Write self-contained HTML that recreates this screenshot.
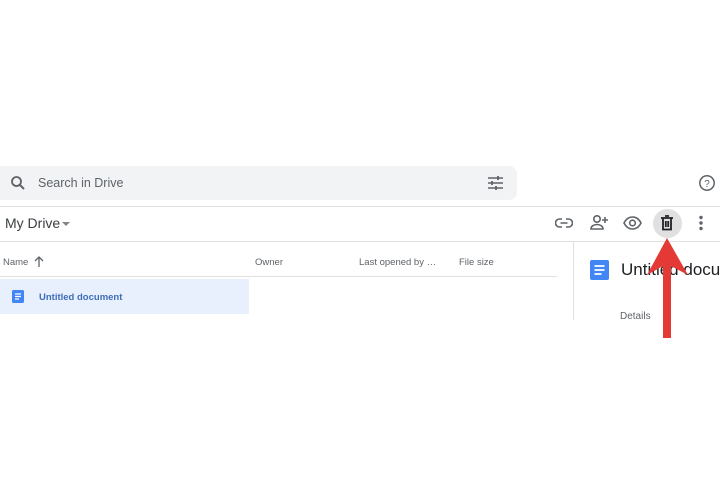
<!DOCTYPE html>
<html><head><style>
body{margin:0;width:720px;height:480px;background:#fff;position:relative;overflow:hidden;font-family:"Liberation Sans",Arial,sans-serif;}
.a{position:absolute}
</style></head><body>
<div class="a" style="left:0;top:166px;width:517px;height:34px;background:#f1f3f4;border-radius:0 8px 8px 0"></div>
<svg class="a" style="left:9px;top:174px" width="18" height="18" viewBox="0 0 24 24"><circle cx="10" cy="10" r="6" fill="none" stroke="#5f6368" stroke-width="2.4"/><path d="M14.5 14.5L20 20" stroke="#5f6368" stroke-width="2.6"/></svg>
<div class="a" style="left:38px;top:176px;font-size:12.5px;color:#5f6368">Search in Drive</div>
<svg class="a" style="left:487px;top:175px" width="17" height="16" viewBox="0 0 17 16" stroke="#5f6368" stroke-width="1.6"><path d="M1 3h15M1 8h15M1 13h15"/><path d="M11 1v4M5 6v4M9 11v4" stroke-width="1.8"/></svg>
<svg class="a" style="left:698px;top:174px" width="18" height="18" viewBox="0 0 18 18"><circle cx="9" cy="9" r="7.2" fill="none" stroke="#5f6368" stroke-width="1.5"/><text x="9" y="13" text-anchor="middle" font-size="10" fill="#5f6368" font-family="Liberation Sans">?</text></svg>
<div class="a" style="left:0;top:206px;width:720px;height:1px;background:#e0e0e0"></div>
<div class="a" style="left:5px;top:215px;font-size:14px;color:#3c4043">My Drive</div>
<div class="a" style="left:62px;top:222px;border:4px solid transparent;border-top:4px solid #80868b"></div>
<svg class="a" style="left:555px;top:216px" width="18" height="14" viewBox="0 0 18 14" fill="none" stroke="#5f6368" stroke-width="1.6"><path d="M7 3H4.5a4 4 0 0 0 0 8H7M11 3h2.5a4 4 0 0 1 0 8H11M5.5 7h7"/></svg>
<svg class="a" style="left:589px;top:214px" width="20" height="17" viewBox="0 0 20 17" fill="none" stroke="#5f6368" stroke-width="1.6"><circle cx="8" cy="5" r="3.2"/><path d="M2 15c0-3 3-4.5 6-4.5s6 1.5 6 4.5z"/><path d="M16 3v6M13 6h6"/></svg>
<svg class="a" style="left:623px;top:216px" width="19" height="14" viewBox="0 0 19 14" fill="none" stroke="#5f6368" stroke-width="1.6"><path d="M1 7c2-4 5-6 8.5-6S16 3 18 7c-2 4-5 6-8.5 6S3 11 1 7z"/><circle cx="9.5" cy="7" r="2.8"/></svg>
<div class="a" style="left:653px;top:209px;width:29px;height:29px;border-radius:50%;background:#e0e0e0"></div>
<svg class="a" style="left:660px;top:215px" width="14" height="16" viewBox="0 0 14 16" fill="none" stroke="#202124" stroke-width="1.8"><path d="M1 3h12M5 1h4M3 3v11.5h8V3M5.8 6v6M8.2 6v6"/></svg>
<svg class="a" style="left:698px;top:215px" width="6" height="16"><circle cx="3" cy="2.5" r="1.7" fill="#5f6368"/><circle cx="3" cy="8" r="1.7" fill="#5f6368"/><circle cx="3" cy="13.5" r="1.7" fill="#5f6368"/></svg>
<div class="a" style="left:0;top:241px;width:720px;height:1px;background:#e0e0e0"></div>
<div class="a" style="left:573px;top:242px;width:1px;height:78px;background:#e0e0e0"></div>
<div class="a" style="left:3px;top:257px;font-size:9.5px;color:#5f6368">Name</div>
<svg class="a" style="left:34px;top:256px" width="10" height="11" viewBox="0 0 10 11" fill="none" stroke="#5f6368" stroke-width="1.3"><path d="M5 11V1M1 5l4-4 4 4"/></svg>
<div class="a" style="left:255px;top:257px;font-size:9.5px;color:#5f6368">Owner</div>
<div class="a" style="left:359px;top:257px;font-size:9.5px;color:#5f6368">Last opened by …</div>
<div class="a" style="left:459px;top:257px;font-size:9.5px;color:#5f6368">File size</div>
<div class="a" style="left:0;top:276px;width:557px;height:1px;background:#e0e0e0"></div>
<div class="a" style="left:0;top:279px;width:249px;height:35px;background:#e8f0fe"></div>
<svg class="a" style="left:12px;top:290px" width="12" height="13" viewBox="0 0 12 13"><rect width="12" height="13" rx="1.5" fill="#4285f4"/><path d="M3 4h6M3 6.5h6M3 9h4" stroke="#fff" stroke-width="1.2"/></svg>
<div class="a" style="left:39px;top:292px;font-size:9.5px;font-weight:bold;color:#3f6db8">Untitled document</div>
<svg class="a" style="left:590px;top:260px" width="19" height="20" viewBox="0 0 19 20"><rect width="19" height="20" rx="2" fill="#4285f4"/><path d="M4.5 6h10M4.5 10h10M4.5 14h7" stroke="#fff" stroke-width="1.8"/></svg>
<div class="a" style="left:621px;top:260px;width:99px;height:24px;overflow:hidden;font-size:17px;color:#202124;white-space:nowrap">Untitled document</div>
<div class="a" style="left:620px;top:311px;font-size:10px;color:#5f6368">Details</div>
<svg class="a" style="left:640px;top:230px" width="60" height="110" viewBox="0 0 60 110"><path d="M27 8L7 45L23 36L23 108L31 108L31 36L48 45Z" fill="#e53935"/></svg>
</body></html>
